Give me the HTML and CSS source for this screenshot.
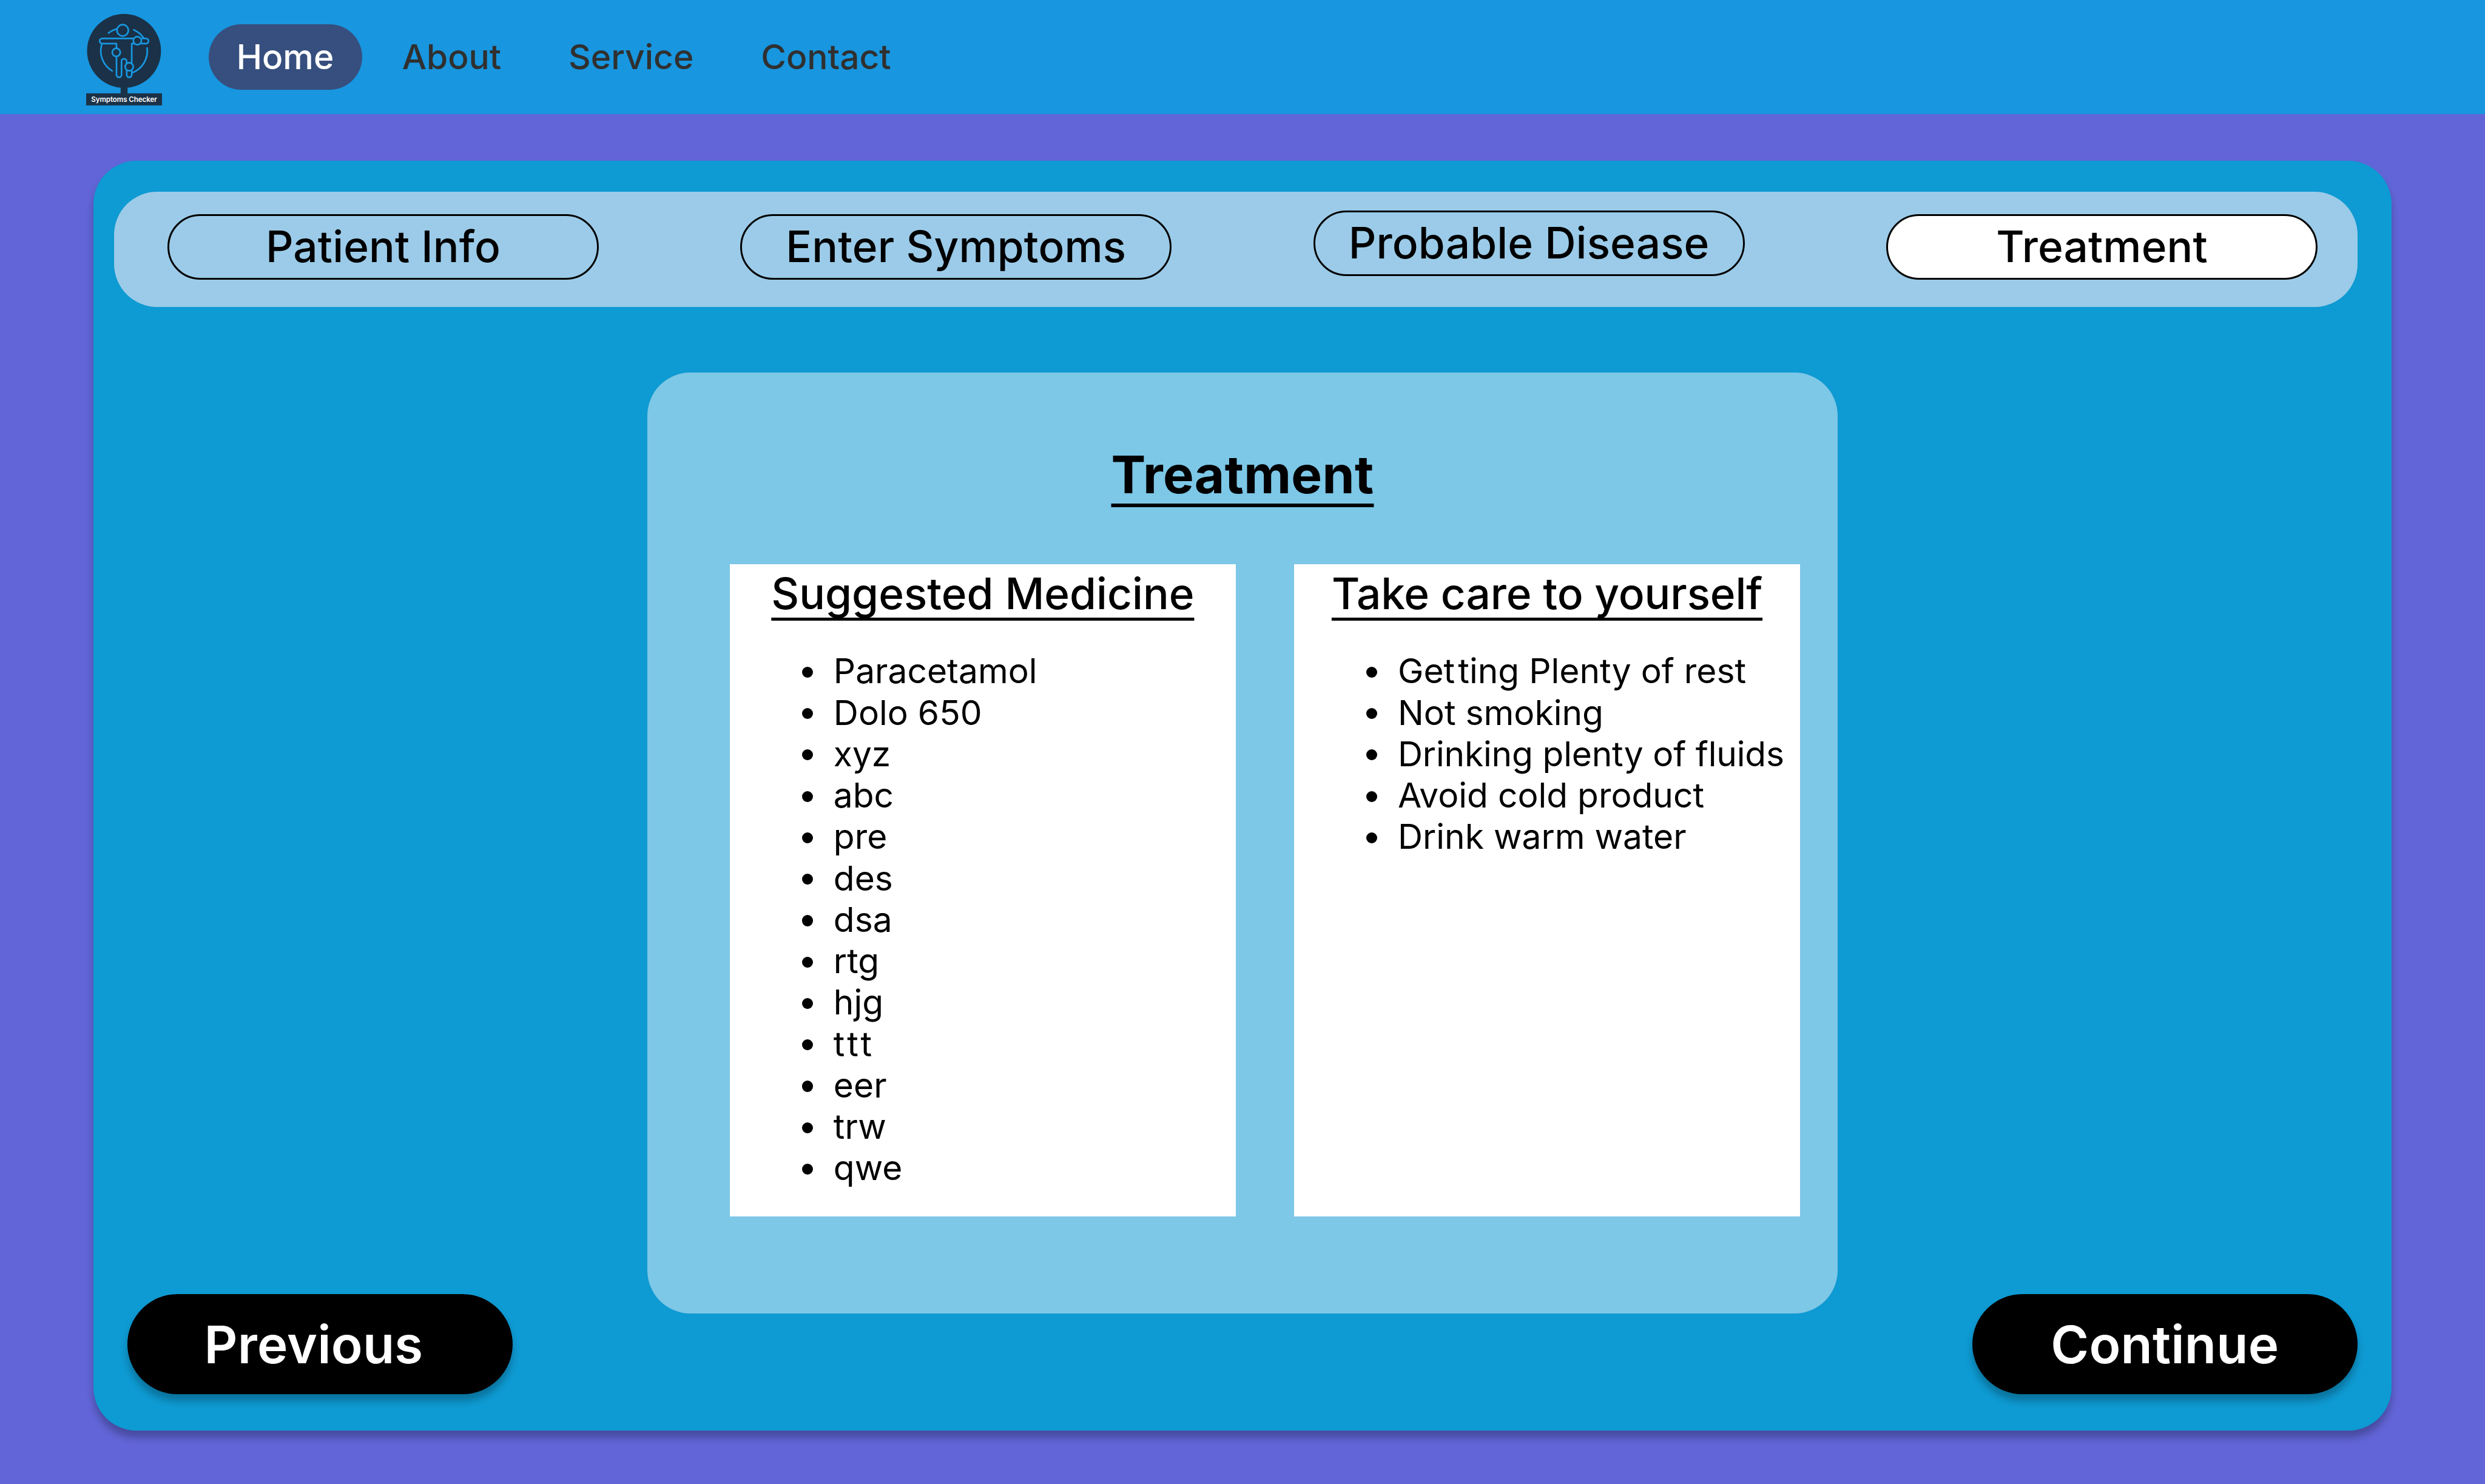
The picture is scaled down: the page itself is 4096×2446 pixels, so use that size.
FILE: index.html
```html
<!DOCTYPE html>
<html lang="en">
<head>
<meta charset="utf-8">
<title>Symptoms Checker</title>
<link rel="stylesheet" href="styles.css">
</head>
<body>
<header class="topbar">
  <svg class="logo" viewBox="60 36 528 636" role="img" aria-label="Symptoms Checker">
    <g fill="#1a3147">
      <circle cx="323.5" cy="293" r="257"/>
      <rect x="300" y="540" width="48" height="60"/>
      <rect x="60" y="588" width="528" height="84"/>
    </g>
    <g fill="none" stroke="#1896df" stroke-width="11.5" stroke-linecap="round" stroke-linejoin="round">
      <circle cx="314" cy="150" r="39.5"/>
      <circle cx="416" cy="222" r="28"/>
      <circle cx="269.500" cy="303" r="28"/>
      <circle cx="359.500" cy="403" r="28"/>
      <path d="M215 169A162 162 0 0 1 272 140M391 147A162 162 0 0 1 459 202"/>
      <path d="M168 248A162 162 0 0 0 241 432M484 273A162 162 0 0 1 383 444"/>
      <path d="M386 206H172A18 18 0 0 0 172 242H271V273M450 206H476A18 18 0 0 1 476 242H444"/>
      <path d="M271 334V459A17.500 17.500 0 0 0 306 459V365A17.500 17.500 0 0 1 341 365V376M342 430V459A17.500 17.500 0 0 0 377 459V430M377 376V242H388"/>
    </g>
    <text class="logo-text" x="324" y="648" text-anchor="middle" textLength="458">Symptoms Checker</text>
  </svg>
  <nav class="nav">
    <a class="nav-link nav-link-active">Home</a>
    <a class="nav-link">About</a>
    <a class="nav-link">Service</a>
    <a class="nav-link">Contact</a>
  </nav>
</header>
<main class="card">
  <div class="steps">
    <div class="step">Patient Info</div>
    <div class="step">Enter Symptoms</div>
    <div class="step step-raised">Probable Disease</div>
    <div class="step step-current">Treatment</div>
  </div>
  <div class="stage">
    <button class="btn btn-prev">Previous</button>
    <section class="panel">
      <h1 class="title">Treatment</h1>
      <div class="boxes">
        <div class="box">
          <h2 class="box-title">Suggested Medicine</h2>
          <ul class="list">
            <li>Paracetamol</li>
            <li>Dolo 650</li>
            <li>xyz</li>
            <li>abc</li>
            <li>pre</li>
            <li>des</li>
            <li>dsa</li>
            <li>rtg</li>
            <li>hjg</li>
            <li><span class="wide">ttt</span></li>
            <li>eer</li>
            <li>trw</li>
            <li>qwe</li>
          </ul>
        </div>
        <div class="box">
          <h2 class="box-title box-title-long">Take care to yourself</h2>
          <ul class="list">
            <li><span>Ge<span class="wide">t</span>ting Plenty of rest</span></li>
            <li>Not smoking</li>
            <li class="snug">Drinking plenty of fluids</li>
            <li>Avoid cold product</li>
            <li>Drink warm water</li>
          </ul>
        </div>
      </div>
    </section>
    <button class="btn">Continue</button>
  </div>
</main>
</body>
</html>
```
FILE: styles.css
```css
/* 1rem = 10 units of the 1440-unit wide layout */
html {
  font-size: calc(100vw / 144);
}

* {
  box-sizing: border-box;
}

body {
  margin: 0;
  height: 100vh;
  overflow: hidden;
  background: #6165d7;
  font-family: Inter, "Liberation Sans", sans-serif;
  color: #000;
}

.topbar {
  display: flex;
  height: 6.6rem;
  padding-left: 5rem;
  background: #1896df;
}

.logo {
  width: 4.4rem;
  height: 5.3rem;
  margin-top: 0.8rem;
}

.logo-text {
  fill: #fff;
  font-size: 49px;
  font-weight: 600;
}

.nav {
  display: flex;
  align-items: center;
  gap: 0.7rem;
  margin-left: 2.7rem;
}

.nav-link {
  display: flex;
  align-items: center;
  height: 3.8rem;
  padding: 0 1.6rem;
  border-radius: 1.9rem;
  font-size: 2rem;
  font-weight: 500;
  color: #303030;
}

.nav-link-active {
  width: 8.9rem;
  background: #364f7e;
  color: #fff;
}

.card {
  display: flex;
  flex-direction: column;
  width: 133.2rem;
  height: 73.6rem;
  margin: 2.7rem auto 0;
  padding: 1.8rem 2rem 0 1.2rem;
  border-radius: 2.5rem;
  background: #0e9ad2;
  box-shadow: 0 0.4rem 0.4rem rgba(0, 0, 0, 0.25);
}

.steps {
  display: flex;
  gap: 8.2rem;
  height: 6.7rem;
  padding: 1.3rem 2.3rem 0 3.1rem;
  border-radius: 2.5rem;
  background: #9bcbe8;
}

.step {
  display: flex;
  align-items: center;
  justify-content: center;
  width: 25rem;
  height: 3.8rem;
  padding-bottom: 2px;
  border: 3px solid #000;
  border-radius: 1.9rem;
  font-size: 2.5rem;
  font-weight: 500;
  letter-spacing: 0.004rem;
}

.step-raised {
  margin-top: -0.2rem;
}

.step-current {
  background: #fff;
}

.stage {
  display: flex;
  justify-content: space-between;
  align-items: flex-end;
  height: 63rem;
  padding-left: 0.8rem;
}

.btn {
  width: 22.3rem;
  height: 5.8rem;
  padding: 0;
  border: 0;
  border-radius: 2.9rem;
  background: #000;
  box-shadow: 0 0.4rem 0.4rem rgba(0, 0, 0, 0.25);
  color: #fff;
  font: 600 3rem Inter, "Liberation Sans", sans-serif;
  letter-spacing: 0.007rem;
}

.btn-prev {
  padding-right: 0.75rem;
}

.panel {
  align-self: flex-start;
  width: 69rem;
  height: 54.5rem;
  margin-top: 3.8rem;
  padding: 4.1rem 2.2rem 0 4.8rem;
  border-radius: 2.5rem;
  background: #7dc7e7;
}

.title,
.box-title {
  margin: 0;
  text-align: center;
  text-decoration: underline;
  text-decoration-skip-ink: none;
  text-decoration-thickness: 0.07em;
  text-underline-offset: 0.195em;
}

.title {
  height: 7rem;
  padding-right: 2.6rem;
  font-size: 3rem;
  font-weight: 700;
  line-height: 3.6rem;
  letter-spacing: 0.01rem;
}

.boxes {
  display: flex;
  gap: 3.4rem;
}

.box {
  width: 29.3rem;
  height: 37.8rem;
  padding-top: 0.2rem;
  background: #fff;
}

.box-title {
  font-size: 2.5rem;
  font-weight: 500;
  line-height: 3rem;
}

.box-title-long {
  letter-spacing: -0.004rem;
}

.list {
  margin: 1.8rem 0 0;
  padding: 0 0 0 6rem;
  list-style: none;
  font-size: 2rem;
  line-height: 2.4rem;
}

.list li {
  display: flex;
  align-items: center;
  white-space: nowrap;
}

.list li::before {
  content: "";
  width: 0.64rem;
  height: 0.64rem;
  margin: 0.1rem 1.18rem 0 -1.82rem;
  border-radius: 50%;
  background: #000;
}

.list .snug {
  letter-spacing: -0.0065rem;
}

.wide {
  letter-spacing: 0.18rem;
}
```
